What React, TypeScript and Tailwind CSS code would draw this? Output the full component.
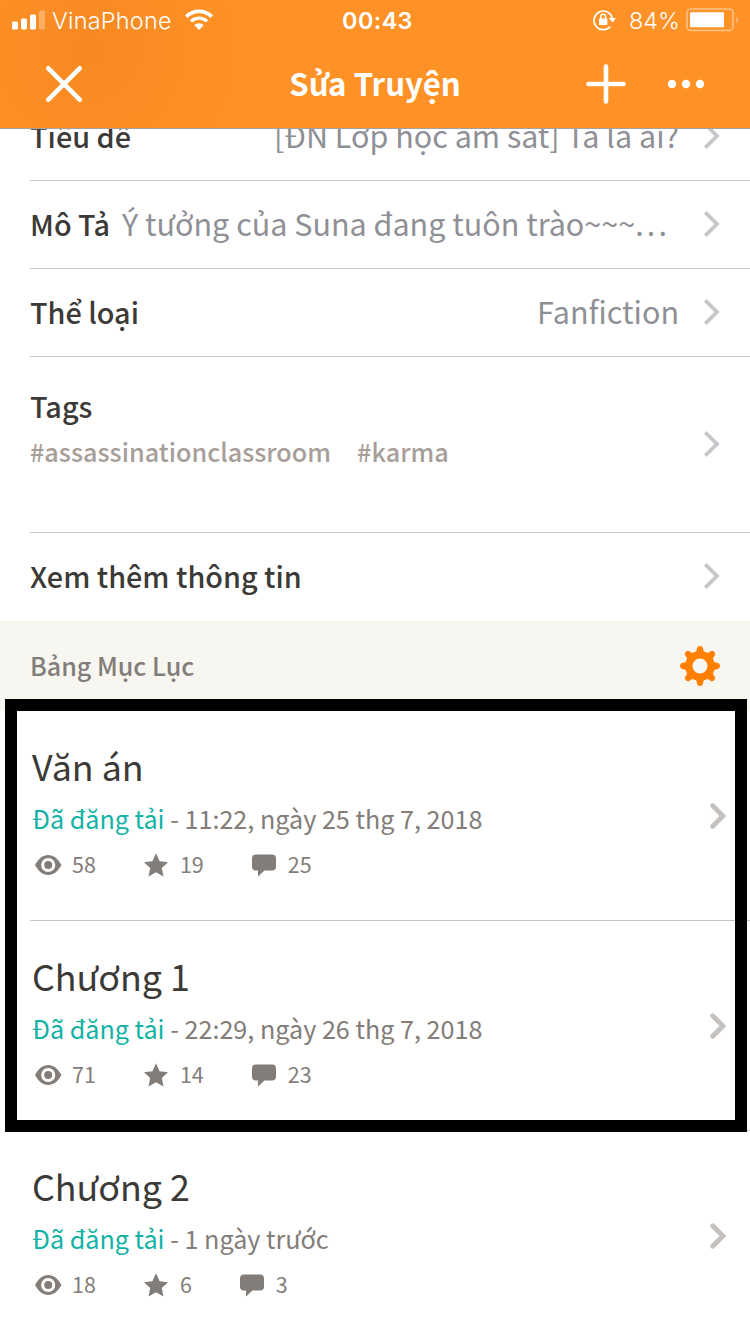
import type { ReactNode } from "react";

interface Chapter {
  title: string;
  date: string;
  views: number;
  votes: number;
  comments: number;
}

const CHAPTERS: Chapter[] = [
  { title: "Văn án", date: "11:22, ngày 25 thg 7, 2018", views: 58, votes: 19, comments: 25 },
  { title: "Chương 1", date: "22:29, ngày 26 thg 7, 2018", views: 71, votes: 14, comments: 23 },
  { title: "Chương 2", date: "1 ngày trước", views: 18, votes: 6, comments: 3 },
];

const TAGS = ["#assassinationclassroom", "#karma"];

const GEAR_TEETH = [0, 45, 90, 135, 180, 225, 270, 315];

function Chevron() {
  return (
    <svg className="mb-[2px] shrink-0 text-[#c6c7cb]" width="17" height="28" viewBox="0 0 17 28" fill="none">
      <path d="M2.3 2.3 L14 14 L2.3 25.7" stroke="currentColor" strokeWidth="3.8" />
    </svg>
  );
}

function StatusBar() {
  return (
    <div className="grid h-10 grid-cols-3 items-center px-3 font-['Inter',sans-serif] text-[23.4px] leading-none">
      <div className="flex items-center">
        <svg width="34" height="20" viewBox="0 0 34 20" fill="currentColor">
          <rect x="0" y="11.5" width="6" height="8" rx="1.5" />
          <rect x="9" y="8.5" width="6" height="11" rx="1.5" />
          <rect x="18" y="4.5" width="6" height="15" rx="1.5" />
          <rect x="27" y="0.5" width="6" height="19" rx="1.5" opacity="0.3" />
        </svg>
        <span className="ml-[6px] w-[121px] pt-[2px] font-light tracking-[0.25px]">VinaPhone</span>
        <svg className="ml-[11px]" width="30" height="22" viewBox="0 0 30 22" fill="none">
          <path d="M2.2 7.6 A18.2 18.2 0 0 1 27.8 7.6" stroke="currentColor" strokeWidth="3.6" />
          <path d="M7 12.4 A11.4 11.4 0 0 1 23 12.4" stroke="currentColor" strokeWidth="3.4" />
          <path d="M15 21 L10.2 16.2 A7 7 0 0 1 19.8 16.2 Z" fill="currentColor" />
        </svg>
      </div>
      <span className="pt-[2px] pl-[5px] text-center font-semibold tracking-[0.4px]">00:43</span>
      <div className="-mr-[2px] flex items-center justify-end">
        <svg width="24" height="22" viewBox="0 0 24 22" fill="none">
          <path d="M17.2 17.6 A9.3 9.3 0 1 1 19.3 9" stroke="currentColor" strokeWidth="1.7" />
          <path d="M15.8 9 H23 L19.6 13.4 Z" fill="currentColor" />
          <rect x="6" y="9.6" width="8.4" height="6.4" rx="0.8" fill="currentColor" />
          <path d="M7.8 10 V7.6 A2.4 2.4 0 0 1 12.6 7.6 V10" stroke="currentColor" strokeWidth="1.5" />
        </svg>
        <span className="ml-[12px] w-[51px] pt-[2px] font-light">84%</span>
        <svg className="ml-[6px]" width="54" height="24" viewBox="0 0 54 24" fill="none">
          <rect x="1" y="1" width="46" height="21.5" rx="4" stroke="currentColor" strokeWidth="1.6" opacity="0.45" />
          <rect x="4" y="4.2" width="34" height="15" rx="1" fill="currentColor" />
          <path d="M50.4 8 Q53 11.7 50.4 15.5 Z" fill="currentColor" opacity="0.45" />
        </svg>
      </div>
    </div>
  );
}

function Header() {
  return (
    <header className="relative z-10 h-[129px] border-b border-[#a8a19b] bg-[#fe9226] bg-[radial-gradient(circle_at_90px_50px,#f68a20_0,#fa8e24_70px,#fe9226_170px)] text-white">
      <StatusBar />
      <div className="flex h-[88px] items-center px-[45px]">
        <div className="w-[160px]">
          <svg width="38" height="38" viewBox="0 0 38 38" stroke="currentColor" strokeWidth="4.6" strokeLinecap="round">
            <path d="M3.3 3.3 L34.7 34.7 M34.7 3.3 L3.3 34.7" />
          </svg>
        </div>
        <h1 className="flex-1 pb-[2px] text-center text-[31.2px] leading-[40px] font-bold">Sửa Truyện</h1>
        <div className="flex w-[160px] items-center justify-end gap-[41px]">
          <svg width="40" height="40" viewBox="0 0 40 40" stroke="currentColor" strokeWidth="4.6" strokeLinecap="round">
            <path d="M20 2.5 V37.5 M2.5 20 H37.5" />
          </svg>
          <svg width="38" height="10" viewBox="0 0 38 10" fill="currentColor">
            <circle cx="5" cy="5" r="4.2" />
            <circle cx="19" cy="5" r="4.2" />
            <circle cx="33" cy="5" r="4.2" />
          </svg>
        </div>
      </div>
    </header>
  );
}

function Row({ label, children }: { label: string; children?: ReactNode }) {
  return (
    <div className="ml-[30px] flex h-[88px] items-center border-b border-[#c6c6c6] pr-[30px]">
      <span className="shrink-0 pb-[2px] text-[28.8px] font-medium text-[#3c3a37]">{label}</span>
      <span className="ml-3 flex-1 pb-[2px] text-right text-[30.5px] whitespace-nowrap text-[#8f9095]">{children}</span>
      <span className="ml-6 flex">
        <Chevron />
      </span>
    </div>
  );
}

function Stat({ icon, value }: { icon: ReactNode; value: number }) {
  return (
    <div className="flex items-center">
      {icon}
      <span className="ml-[10px] text-[21.5px]">{value}</span>
    </div>
  );
}

function ChapterRow({ chapter }: { chapter: Chapter }) {
  return (
    <div className="ml-[30px] flex h-[210px] items-center border-b border-[#c6c6c6] pr-[23px] pl-[2px]">
      <div className="flex-1 pb-[8px]">
        <h2 className="text-[35.8px] leading-[52px] text-[#3c3a37]">{chapter.title}</h2>
        <p className="text-[25.15px] leading-[54px] text-[#837d79]">
          <span className="text-[#12b2a6]">Đã đăng tải</span> - {chapter.date}
        </p>
        <div className="flex h-10 items-center gap-[48px] pl-[2px] text-[#837d79]">
          <Stat
            value={chapter.views}
            icon={
              <svg width="28" height="24" viewBox="-1 0 28 24" fill="currentColor" fillRule="evenodd">
                <path d="M0 12 C3.5 5.4 8 2 13.2 2 S23 5.4 26.4 12 C23 18.6 18.5 22 13.2 22 S3.5 18.6 0 12 Z M13.2 4.9 A7.1 7.1 0 1 0 13.2 19.1 A7.1 7.1 0 1 0 13.2 4.9 Z M13.2 8 A4 4 0 1 1 13.2 16 A4 4 0 1 1 13.2 8 Z" />
              </svg>
            }
          />
          <Stat
            value={chapter.votes}
            icon={
              <svg width="26" height="24" viewBox="1 0 26 24" fill="currentColor">
                <path d="M13 0.2 L16.6 8.3 L25 9.2 L18.8 14.9 L20.5 23.5 L13 19.2 L5.5 23.5 L7.2 14.9 L1 9.2 L9.4 8.3 Z" />
              </svg>
            }
          />
          <Stat
            value={chapter.comments}
            icon={
              <svg width="26" height="24" viewBox="2 0 26 24" fill="currentColor">
                <path d="M6 1.5 H22 Q26 1.5 26 5.5 V13.5 Q26 17.5 22 17.5 H14.5 L8 23.5 V17.5 H6 Q2 17.5 2 13.5 V5.5 Q2 1.5 6 1.5 Z" />
              </svg>
            }
          />
        </div>
      </div>
      <svg className="shrink-0 text-[#c4c0bd]" width="17" height="26" viewBox="0 0 17 26" fill="none">
        <path d="M2.7 2.8 L12.9 13 L2.7 23.2" stroke="currentColor" strokeWidth="4.8" strokeLinecap="round" />
      </svg>
    </div>
  );
}

function GearIcon() {
  return (
    <svg width="40" height="40" viewBox="0 0 40 40" className="text-[#ff8000]">
      <circle cx="20" cy="20" r="11.2" fill="none" stroke="currentColor" strokeWidth="7.4" />
      {GEAR_TEETH.map((angle) => (
        <path
          key={angle}
          d="M15 8 Q16.7 5.5 17 2.2 Q17.2 0 20 0 Q22.8 0 23 2.2 Q23.3 5.5 25 8 Z"
          fill="currentColor"
          transform={`rotate(${angle} 20 20)`}
        />
      ))}
    </svg>
  );
}

export default function App() {
  return (
    <div className="relative h-[1334px] w-[750px] overflow-hidden bg-white font-['Noto_Sans_CJK_SC',sans-serif]">
      <Header />
      {/* list is scrolled, its first row sits partly under the header */}
      <main className="-mt-9">
        <Row label="Tiêu đề">[ĐN Lớp học ám sát] Ta là ai?</Row>
        <Row label="Mô Tả">
          Ý tưởng của Suna đang tuôn trào~~~<span className="mr-[9px] tracking-[3.2px]">...</span>
        </Row>
        <Row label="Thể loại">Fanfiction</Row>
        <div className="ml-[30px] flex h-[176px] items-center border-b border-[#c6c6c6] pr-[30px]">
          <div className="flex-1 pb-[34px]">
            <p className="text-[28.8px] leading-[46px] font-medium text-[#3c3a37]">Tags</p>
            <div className="flex gap-[26px] text-[25.2px] leading-[44px] font-medium text-[#a79e99]">
              {TAGS.map((tag) => (
                <span key={tag}>{tag}</span>
              ))}
            </div>
          </div>
          <Chevron />
        </div>
        <div className="ml-[30px] flex h-[88px] items-center justify-between pr-[30px]">
          <span className="pb-[2px] text-[28.8px] font-medium text-[#3c3a37]">Xem thêm thông tin</span>
          <Chevron />
        </div>
        <div className="flex h-[90px] items-center justify-between bg-[#f7f6f1] px-[30px]">
          <span className="text-[25.1px] font-medium text-[#837d79]">Bảng Mục Lục</span>
          <GearIcon />
        </div>
        {CHAPTERS.map((chapter) => (
          <ChapterRow key={chapter.title} chapter={chapter} />
        ))}
      </main>
      {/* highlight frame around the first two chapters */}
      <div className="pointer-events-none absolute top-[699px] left-[5px] h-[433px] w-[742px] border-12 border-black" />
    </div>
  );
}
